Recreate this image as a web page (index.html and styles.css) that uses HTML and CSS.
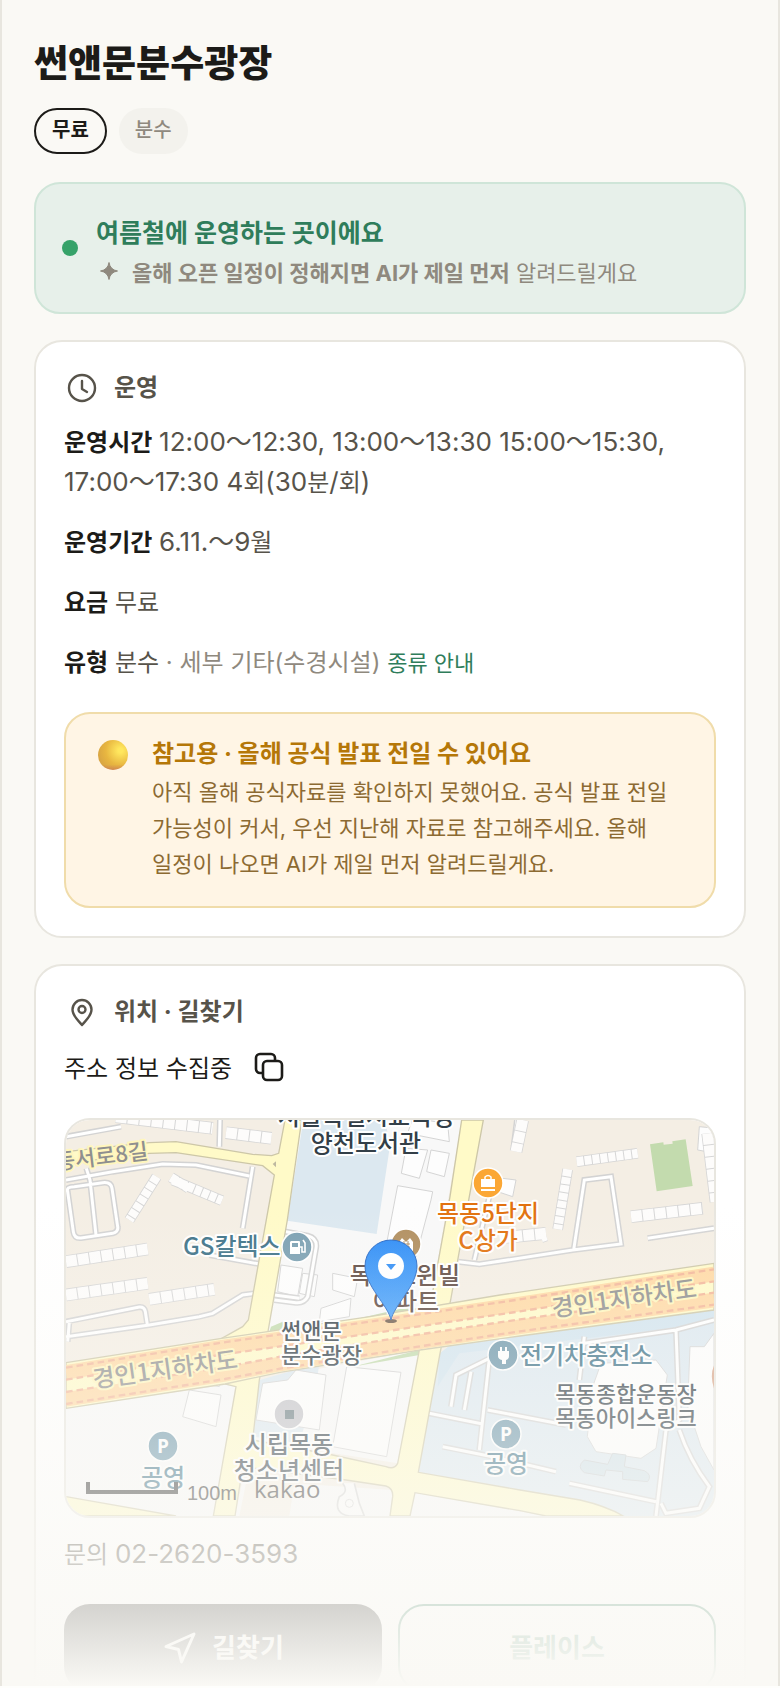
FILE: index.html
```html
<!DOCTYPE html>
<html lang="ko">
<head>
<meta charset="utf-8">
<meta name="viewport" content="width=device-width, initial-scale=1">
<title>썬앤문분수광장</title>
<link rel="stylesheet" href="styles.css">
</head>
<body>
<main class="screen">
  <header class="head">
    <h1 class="title">썬앤문분수광장</h1>
    <div class="chips">
      <span class="chip chip-line">무료</span>
      <span class="chip">분수</span>
    </div>
  </header>

  <section class="status">
    <span class="status-dot"></span>
    <div class="status-body">
      <p class="status-title">여름철에 운영하는 곳이에요</p>
      <p class="status-sub">
        <svg class="spark" viewBox="0 0 18 18" aria-hidden="true"><path d="M9 0.500 Q10.200 7.800 17.500 9 Q10.200 10.200 9 17.500 Q7.800 10.200 0.500 9 Q7.800 7.800 9 0.500Z"/></svg>
        <span><b>올해 오픈 일정이 정해지면 AI가 제일 먼저</b> 알려드릴게요</span>
      </p>
    </div>
  </section>

  <section class="card">
    <h2 class="card-head">
      <svg class="icon" viewBox="0 0 36 36" aria-hidden="true"><circle cx="18" cy="18" r="13"/><path d="M18 11v8l5 3"/></svg>
      운영
    </h2>
    <div class="rows">
      <p><b>운영시간</b> <span class="num">12:00～12:30, 13:00～13:30 15:00～15:30, 17:00～17:30 4</span>회<span class="num">(30</span>분<span class="num">/</span>회<span class="num">)</span></p>
      <p><b>운영기간</b> <span class="num">6.11.～9</span>월</p>
      <p><b>요금</b> 무료</p>
      <p><b>유형</b> 분수 <span class="muted">· 세부 기타(수경시설)</span> <a class="guide" href="#types">종류 안내</a></p>
    </div>
    <div class="notice">
      <span class="ball"></span>
      <div class="notice-body">
        <p class="notice-title">참고용 · 올해 공식 발표 전일 수 있어요</p>
        <p class="notice-text">아직 올해 공식자료를 확인하지 못했어요. 공식 발표 전일 가능성이 커서, 우선 지난해 자료로 참고해주세요. 올해 일정이 나오면 AI가 제일 먼저 알려드릴게요.</p>
      </div>
    </div>
  </section>

  <section class="card">
    <h2 class="card-head">
      <svg class="icon" viewBox="0 0 36 36" aria-hidden="true"><path d="M18 31C14 26 8.500 22 8.500 15.500a9.500 9.500 0 0 1 19 0C27.500 22 22 26 18 31Z"/><circle cx="18" cy="15.500" r="3.500"/></svg>
      위치 · 길찾기
    </h2>
    <div class="address">
      <span>주소 정보 수집중</span>
      <button class="copy" type="button" aria-label="주소 복사">
        <svg viewBox="0 0 30 30" aria-hidden="true"><rect x="9" y="9" width="19" height="19" rx="4"/><path d="M9 21H6a4 4 0 0 1-4-4V6a4 4 0 0 1 4-4h11a4 4 0 0 1 4 4v3"/></svg>
      </button>
    </div>

    <div class="map">
      <svg class="map-art" viewBox="0 0 648 396" preserveAspectRatio="xMidYMid slice" role="img" aria-label="지도">
        <defs>
          <linearGradient id="pin" x1="0" y1="0" x2="0" y2="1"><stop offset="0" stop-color="#2f8df6"/><stop offset="1" stop-color="#4aa3fb"/></linearGradient>
          <path id="lanes" d="M0 180L140 155 290 132 390 135 550 168M61 145L72 180 90 345M5 215Q0 200 25 200L110 188Q135 185 138 205L155 320Q158 335 140 340L45 354Q25 356 22 335ZM560 140L530 325M430 405L580 432M0 605L220 561Q235 560 238 575L245 620M5 665L10 605M0 650L250 615 400 590 440 580 530 525 570 520M625 525L700 535M632 330L725 347Q755 355 750 385L725 530Q715 550 690 548L625 540M1195 225L1160 222M1225 0L1208 100M1353 0L1343 80M462 0L460 80M0 50L165 20M1177 425L1240 433 1520 390 1665 372 1635 170 1555 180 1523 390M1225 420L1270 230M1745 355L1944 325"/>
          <path id="lanes2" d="M1270 715L1170 765 1155 860M1215 755L1195 870M1270 715L1240 990M1089 880L1250 912M1265 870L1500 915M1130 980L1280 1010 1470 1055M1555 650L1540 780M1555 670L1830 630 1944 600M1830 630L1840 900 1800 930 1770 1188M1510 1090L1770 1145M1840 930Q1870 1020 1930 1100L1900 1165 1800 1180 1785 1150"/>
          <path id="wide" d="M0 425L245 387M0 525L245 490M250 538L445 508M480 38L616 55M150 -10L440 25M1370 0L1350 95M1695 290L1910 265M1925 40L1950 245M1425 350L1440 345M1300 354L1440 340"/>
          <path id="thin" d="M315 172L368 205M320 180L468 242M272 170L190 300M1532 125L1715 100M1505 148L1475 328"/>
        </defs>
        <g transform="scale(.333333)">
          <rect width="1944" height="1188" fill="#f4eee4"/>
          <path fill="#f8f8f8" d="M707 0H1187L1092 560 600 650 664 302ZM0 865L510 790 442 1188H0ZM580 780L1060 690 995 1030 550 960ZM507 1188L530 1080 980 1110 972 1188ZM1047 1118L1440 1188H1032Z"/>
          <path fill="#dce8f0" d="M712 0H960L970 90 932 342 664 302ZM580 780L760 730 750 800 700 970 560 950ZM1122 700L1160 670 1944 570V1188H1672L1542 1140 1362 1110 1057 1057Z"/>
          <path fill="#d2e4ef" d="M1122 700L1160 670 1944 565V610L1180 700 1115 800Z"/>
          <path fill="#f5efe5" d="M550 1040L690 1060 670 1188H520Z"/>
          <path fill="#c3dbae" d="M1752 73L1792 67 1793 74 1820 71 1819 64 1859 58 1880 198 1772 214ZM880 595L1030 560 1020 600ZM880 735L1060 690V705L860 740ZM615 620L650 605 660 640 605 650Z"/>
          <path class="plot" d="M1025 40L1150 65 1145 10 1040 -5ZM1020 85L1085 90 1060 175 1006 160ZM1095 90L1150 100 1135 170 1082 155ZM995 197L1100 215 1095 240 1050 410 960 380ZM645 435L710 445 695 530 635 515ZM710 460L755 465 745 530 700 520ZM800 460L875 475 865 530 800 510ZM765 565L855 535 850 590 760 605ZM842 740L1005 757 962 1010 800 980ZM405 680Q460 670 476 730L460 800 380 785 395 700ZM370 810L465 825 450 920 350 890ZM665 780L690 750 780 765 760 930 570 900 590 790ZM1310 175L1350 180 1340 230 1295 215ZM1900 20L1950 25V100L1895 90Z"/>
          <use href="#lanes" class="lane-edge"/><use href="#lanes" class="lane"/>
          <use href="#wide" class="wide-edge"/><use href="#wide" class="wide"/>
          <use href="#thin" class="thin-edge"/><use href="#thin" class="thin"/>
          <use href="#lanes2" class="lane-edge"/><use href="#lanes2" class="lane"/>
          <path class="plot" d="M1605 730L1770 720 1804 765 1770 985 1725 1015 1590 995 1564 950 1580 800ZM1872 680L1915 680 1944 640V1050L1905 980 1865 860Z"/>
          <path fill="#cfe0e8" stroke="#c9ced1" stroke-width="3" d="M1555 1020L1625 1033 1640 1000 1680 1005 1675 1040 1735 1052Q1760 1065 1745 1085L1670 1078 1670 1055 1620 1050 1615 1068 1555 1058Q1530 1040 1555 1020Z"/>
          <path fill="#a9cf8f" stroke="#d8a58a" stroke-width="10" d="M1965 715Q1920 760 1965 840Z"/>
          <path class="road" d="M0 95L250 68 330 65 560 103 617 107 638 100 657 0H707L664 300 605 640 580 780 560 960 800 1005 960 1040Q985 1050 995 1030L1060 690 1092 560 1152 230 1187 0H1252L1177 410 1154 540 1122 700 1057 1057 1362 1110 1542 1140Q1620 1158 1672 1188H1440L1362 1172 1047 1118 1032 1188H972L980 1130Q982 1105 960 1098L840 1080 530 1040 507 1188H442L510 800 477 792 467 655 530 620 547 600 625 165 590 137 330 98 250 100 0 130ZM0 1130L330 1188H0Z"/>
          <path class="road" d="M0 728L467 655 912 590 1302 525 1944 430V570L1362 648 1062 690 642 757 477 792 0 865Z"/>
          <g class="orange"><path d="M0 757L467 682 912 619 1362 552 1944 462"/><path d="M0 838L477 763 642 732 1062 665 1362 620 1944 540"/></g>
          <g class="dash"><path d="M0 743L467 668 912 605 1362 538 1944 448"/><path d="M0 779L467 704 912 641 1362 574 1944 484"/><path d="M0 816L477 741 642 710 1062 643 1362 598 1944 518"/><path d="M0 852L477 777 642 746 1062 679 1362 634 1944 554"/></g>
          <g fill="none" stroke="#d4d4d4" stroke-width="3"><path fill="#fbfbfb" stroke-width="5" d="M830 1090Q850 1115 820 1130 800 1180 850 1188H895L880 1150 865 1090"/><circle cx="850" cy="1150" r="12"/></g>
          <path fill="#beb8a0" d="M620 132L630 124V142Z"/>
        </g>

        <g class="poi">
          <circle cx="231" cy="127" r="15" fill="#7ba0b2"/><g fill="#fff"><path d="M225 121h8a1 1 0 0 1 1 1v12h-10v-12z"/><path fill="none" stroke="#fff" stroke-width="1.600" d="M234 127h2v5h3v-9l-2-3"/></g><path fill="#7ba0b2" d="M226 123h6v4h-6z"/>
          <circle cx="422" cy="63" r="15" fill="#fba735"/><path fill="#fff" d="M415 59h14v8h-14zM415 69h14v2h-14z"/><path fill="none" stroke="#fff" stroke-width="1.500" d="M419 59v-2q3-3 6 0v2"/>
          <circle cx="340" cy="124" r="15" fill="#b18f60"/><path fill="#fff" d="M333 131v-9l3-4 4 4 4-4 3 4v9z"/><path stroke="#b18f60" d="M336 124h8M336 127h8M338 121v9M342 121v9"/>
          <circle cx="437" cy="235" r="15" fill="#6d97ab"/><path fill="#fff" d="M432 231h2v-4h2v4h3v-4h2v4h2v5q0 3-3 4v4h-4v-4q-4-1-4-4z"/>
          <circle cx="97" cy="326" r="15" fill="#6d97ab"/><circle cx="440" cy="314" r="15" fill="#6d97ab"/>
          <circle cx="223" cy="294" r="15" fill="#c2c2c8"/><path fill="#6a7c82" d="M219 290h9v9h-9z"/>
        </g>
        <g class="park"><text x="97" y="333">P</text><text x="440" y="321">P</text></g>
        <g class="label mid">
          <text x="300" y="5">서울특별시교육청</text><text x="300" y="32">양천도서관</text>
          <text x="223" y="333">시립목동</text><text x="223" y="359">청소년센터</text>
          <g class="small"><text x="560" y="282">목동종합운동장</text><text x="560" y="306">목동아이스링크</text></g>
          <g class="brown"><text x="339" y="164">목동트윈빌</text><text x="340" y="190">아파트</text></g>
          <g class="shop"><text x="422" y="102">목동5단지</text><text x="422" y="129">C상가</text></g>
          <g class="teal"><text x="97" y="366">공영</text><text x="440" y="352">공영</text></g>
        </g>
        <g class="label small"><text x="215" y="219">썬앤문</text><text x="215" y="243">분수광장</text></g>
        <g class="label teal"><text x="117" y="135">GS칼텍스</text><text x="454" y="244">전기차충전소</text></g>
        <g class="label street">
          <text class="small" transform="translate(-10 50) rotate(-7)">동서로8길</text>
          <text transform="translate(28 268) rotate(-8)">경인1지하차도</text>
          <text transform="translate(487 197) rotate(-8)">경인1지하차도</text>
        </g>
        <ellipse cx="325" cy="201" rx="6" ry="2" fill="#6e5a4a"/>
        <path fill="url(#pin)" stroke="#2466c4" d="M325 200C322 185 299 166 299 146a26 26 0 0 1 52 0C351 166 328 185 325 200Z"/>
        <circle cx="325" cy="146" r="13" fill="#fff"/><path fill="#2f8df6" d="M320 144h10l-5 6z"/>
        <path fill="none" stroke="#333" stroke-width="4" d="M22 362v10h88v-10"/>
        <text class="scale" x="121" y="380">100m</text>
        <text class="brand" x="188" y="378">kakao</text>
      </svg>
    </div>

    <p class="phone">문의 <span class="num">02-2620-3593</span></p>
    <div class="actions">
      <button class="btn btn-dark" type="button">
        <svg viewBox="0 0 36 36" aria-hidden="true"><path d="M32 4L19.500 32 16.500 19.500 4 16.500Z"/></svg>
        길찾기
      </button>
      <button class="btn btn-line" type="button">플레이스</button>
    </div>
  </section>
  <div class="fade"></div>
</main>
</body>
</html>
```
FILE: styles.css
```css
* {
  box-sizing: border-box;
}

body {
  margin: 0;
  background: #fefefc;
  color: #1c1b18;
  font-family: Inter, "Noto Sans CJK KR", sans-serif;
  font-size: 24px;
  line-height: 40px;
  word-break: keep-all;
}

h1, h2, p {
  margin: 0;
}

button {
  font: inherit;
  cursor: pointer;
}

.screen {
  position: relative;
  display: flex;
  flex-direction: column;
  gap: 26px;
  height: calc(100vh - 2px);
  overflow: hidden;
  padding: 40px 32px 0;
  background: #faf9f5;
  border: solid #e8e6df;
  border-width: 0 2px;
}

.screen > * {
  flex: none;
}

.head {
  padding-bottom: 2px;
}

.title {
  font-size: 37px;
  font-weight: 800;
  line-height: 48px;
}

.chips {
  display: flex;
  gap: 12px;
  margin-top: 20px;
}

.chip {
  padding: 8px 16px 10px;
  border-radius: 24px;
  background: #f3f2ed;
  color: #8f897e;
  font-size: 20px;
  font-weight: 500;
  line-height: 28px;
}

.chip-line {
  padding: 6px 16px 8px;
  border: 2px solid #1c1b18;
  background: none;
  color: #1c1b18;
  font-weight: 700;
}

.status {
  display: flex;
  align-items: center;
  gap: 18px;
  padding: 24px 26px;
  border: 2px solid #cfe5d8;
  border-radius: 26px;
  background: #e7f0ea;
}

.status-dot {
  width: 16px;
  height: 16px;
  border-radius: 50%;
  background: #36a269;
}

.status-body {
  padding-top: 5px;
}

.status-title {
  color: #2f7d5b;
  font-size: 25px;
  font-weight: 700;
}

.status-sub {
  display: flex;
  align-items: center;
  gap: 14px;
  margin-top: 5px;
  padding-left: 4px;
  color: #8f897e;
  font-size: 22px;
  line-height: 30px;
}

.spark {
  width: 18px;
  height: 18px;
  margin-bottom: 4px;
  fill: #8f897e;
  stroke: #8f897e;
}

.card {
  padding: 28px;
  border: 2px solid #e8e6df;
  border-radius: 28px;
  background: #fff;
}

.card-head {
  display: flex;
  align-items: center;
  gap: 14px;
  color: #57534a;
  font-size: 24px;
  font-weight: 700;
  line-height: 36px;
}

.icon {
  width: 36px;
  height: 36px;
  fill: none;
  stroke: #57534a;
  stroke-width: 2.4;
  stroke-linecap: round;
  stroke-linejoin: round;
}

.rows {
  display: grid;
  gap: 20px;
  margin-top: 17px;
  color: #57534a;
}

.rows b {
  color: #1c1b18;
}

.rows .muted {
  color: #8f897e;
}

.num {
  font-size: 26px;
  line-height: 1;
}

.guide {
  color: #2f7d5b;
  font-size: 22px;
  line-height: 1;
  text-decoration: none;
}

.notice {
  display: flex;
  gap: 24px;
  margin-top: 29px;
  padding: 24px 28px 24px 32px;
  border: 2px solid #f0dcaa;
  border-radius: 26px;
  background: #fff5e5;
}

.ball {
  flex: none;
  width: 30px;
  height: 30px;
  margin-top: 2px;
  border-radius: 50%;
  background:
    linear-gradient(transparent 82%, #c9705a99),
    radial-gradient(circle at 75% 35%, #ffe75e 8%, #e8b640 50%, #cf9a44 95%);
}

.notice-title {
  color: #b57708;
  font-weight: 700;
  line-height: 32px;
}

.notice-text {
  margin-top: 4px;
  color: #8c6a32;
  font-size: 22px;
  line-height: 36px;
}

.address {
  display: flex;
  align-items: center;
  gap: 22px;
  margin-top: 17px;
  line-height: 44px;
}

.copy {
  display: flex;
  padding: 0 0 4px;
  border: 0;
  background: none;
}

.copy svg {
  width: 30px;
  height: 30px;
  fill: none;
  stroke: #1c1b18;
  stroke-width: 2.6;
}

.map {
  height: 400px;
  margin-top: 27px;
  overflow: hidden;
  border: 2px solid #e8e6df;
  border-radius: 26px;
}

.map-art {
  display: block;
  width: 100%;
  height: 100%;
}

.lane-edge, .lane, .wide-edge, .wide, .thin-edge, .thin {
  fill: none;
}

.lane-edge { stroke: #d3d3d3; stroke-width: 18; }
.lane { stroke: #fff; stroke-width: 9; }
.wide-edge { stroke: #d6d6d6; stroke-width: 38; }
.wide { stroke: #fdfcfb; stroke-width: 33; stroke-dasharray: 33 3; }
.thin-edge { stroke: #d6d6d6; stroke-width: 32; }
.thin { stroke: #fdfcfb; stroke-width: 27; stroke-dasharray: 21 3; }
.plot { fill: #fdfdfd; stroke: #d4d4d4; stroke-width: 3; }
.road { fill: #fffac8; stroke: #cdc7a8; stroke-width: 4; }
.orange { fill: none; stroke: #ffd9a4; stroke-width: 44; }
.dash { fill: none; stroke: #f3b698; stroke-width: 7; stroke-dasharray: 20 12; }
.poi > circle { stroke: #fff; stroke-width: 1.5; }

.label {
  fill: #333f48;
  stroke: #fff;
  stroke-width: 4;
  stroke-linejoin: round;
  paint-order: stroke;
  font-family: "Noto Sans CJK KR", sans-serif;
  font-size: 24px;
  font-weight: 500;
}

.mid { text-anchor: middle; }
.small { font-size: 22px; }
.brown { fill: #5f4a42; }
.shop { fill: #e2720f; }
.teal { fill: #3f7389; }
.street { fill: #8f8f8f; stroke: #fff6bd; }

.park {
  fill: #fff;
  font-family: "Open Sans", sans-serif;
  font-size: 19px;
  font-weight: 700;
  text-anchor: middle;
}

.scale {
  fill: #333;
  font-family: "Liberation Sans", sans-serif;
  font-size: 20px;
}

.brand {
  fill: #333;
  font-family: "Open Sans", sans-serif;
  font-size: 24px;
}

.phone {
  margin-top: 17px;
  color: #57534a;
}

.actions {
  display: grid;
  grid-template-columns: 1fr 1fr;
  gap: 16px;
  margin-top: 29px;
}

.btn {
  display: flex;
  align-items: center;
  justify-content: center;
  gap: 14px;
  padding: 22px;
  border: 2px solid #1c1b18;
  border-radius: 26px;
  font-size: 26px;
  font-weight: 700;
}

.btn svg {
  width: 36px;
  height: 36px;
  fill: none;
  stroke: currentColor;
  stroke-width: 3;
  stroke-linejoin: round;
}

.btn-dark {
  background: #1c1b18;
  color: #fff;
}

.btn-line {
  border-color: #2f7d5b;
  background: none;
  color: #2f7d5b;
}

.fade {
  position: absolute;
  inset: auto -2px 0;
  height: 480px;
  background: linear-gradient(#faf9f500, #faf9f5);
  pointer-events: none;
}
```
